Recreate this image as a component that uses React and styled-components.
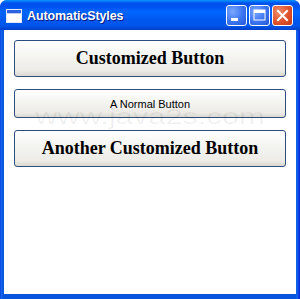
import React from "react";
import styled, { createGlobalStyle, css } from "styled-components";

const Global = createGlobalStyle`
  html, body { margin: 0; padding: 0; background: #fff; }
  #root { width: 300px; height: 299px; }
`;

const Window = styled.div`
  position: relative;
  width: 300px;
  height: 299px;
  box-sizing: border-box;
  display: flex;
  flex-direction: column;
  border-radius: 7px 7px 0 0;
  overflow: hidden;
  background: linear-gradient(90deg, #0831d9 0px, #166aee 1px, #0855dd 3px, #0855dd 296px, #166aee 297px, #0831d9 299px);
`;

const TitleBar = styled.div`
  height: 30px;
  flex: none;
  display: flex;
  align-items: center;
  padding: 0 7px 0 6px;
  box-sizing: border-box;
  background: linear-gradient(180deg, #0997ff 0px, #0053ee 3px, #0050ee 6px, #0066ff 12px, #0058ee 20px, #0055eb 26px, #0043cf 29px);
`;

const AppIcon = styled.svg`
  width: 16px;
  height: 14px;
  flex: none;
  margin-top: 1px;
`;

const Title = styled.span`
  margin-left: 5px;
  font-family: "Liberation Sans", Arial, sans-serif;
  font-weight: bold;
  font-size: 12.5px;
  color: #fff;
  text-shadow: 1px 1px 0 #0a1883;
  letter-spacing: -0.1px;
  margin-top: 1px;
`;

const Controls = styled.div`
  margin-left: auto;
  display: flex;
  gap: 2px;
`;

const CaptionButton = styled.div`
  width: 21px;
  height: 21px;
  box-sizing: border-box;
  border: 1px solid #fff;
  border-radius: 3px;
  display: flex;
  align-items: center;
  justify-content: center;
  ${(p) =>
    p.$close
      ? css`
          background: radial-gradient(circle at 30% 30%, #f08c6a 0%, #e0522c 55%, #c13a14 100%);
        `
      : css`
          background: radial-gradient(circle at 30% 30%, #7aa7ff 0%, #3b74f0 55%, #2457d8 100%);
        `}
`;

const Client = styled.div`
  flex: 1;
  margin: 0 4px 5px 4px;
  background: #fff;
  padding: 10px 10px;
  display: flex;
  flex-direction: column;
  gap: 12px;
`;

const Btn = styled.button`
  height: ${(p) => (p.$big ? 37 : 29)}px;
  width: 100%;
  box-sizing: border-box;
  border: 1px solid #2e4f7d;
  border-radius: 3px;
  background: linear-gradient(180deg, #ffffff 0%, #f5f5f2 40%, #ecebe6 85%, #d9d7cf 100%);
  color: #000;
  padding: 0;
  display: flex;
  align-items: center;
  justify-content: center;
  ${(p) =>
    p.$big
      ? css`
          font-family: "Liberation Serif", "Times New Roman", serif;
          font-weight: bold;
          font-size: 18px;
        `
      : css`
          font-family: "Liberation Sans", Arial, sans-serif;
          font-size: 11px;
        `}
`;

const Watermark = styled.div`
  position: absolute;
  left: 150px;
  top: 104px;
  transform: translateX(-50%) scaleX(1.4);
  font-family: "Liberation Sans", Arial, sans-serif;
  font-size: 22px;
  color: rgba(0, 0, 0, 0.06);
  white-space: nowrap;
  pointer-events: none;
`;

export default function App() {
  return (
    <>
      <Global />
      <Window>
        <TitleBar>
          <AppIcon viewBox="0 0 16 14">
            <rect x="0.5" y="0.5" width="15" height="13" fill="#fff" stroke="#dfe8f7" />
            <rect x="1" y="1" width="14" height="3" fill="#2a62e0" />
            <rect x="1" y="4" width="14" height="0.8" fill="#a9c0ef" />
          </AppIcon>
          <Title>AutomaticStyles</Title>
          <Controls>
            <CaptionButton>
              <svg width="19" height="19" viewBox="0 0 19 19">
                <rect x="4" y="12" width="7" height="3" fill="#fff" />
              </svg>
            </CaptionButton>
            <CaptionButton>
              <svg width="19" height="19" viewBox="0 0 19 19">
                <rect x="4" y="4" width="11" height="10" fill="none" stroke="#fff" strokeWidth="1" />
                <rect x="4" y="4" width="11" height="3" fill="#fff" />
              </svg>
            </CaptionButton>
            <CaptionButton $close>
              <svg width="19" height="19" viewBox="0 0 19 19">
                <path d="M5 5 L14 14 M14 5 L5 14" stroke="#fff" strokeWidth="2" strokeLinecap="square" />
              </svg>
            </CaptionButton>
          </Controls>
        </TitleBar>
        <Client>
          <Btn $big>Customized Button</Btn>
          <Btn>A Normal Button</Btn>
          <Btn $big>Another Customized Button</Btn>
        </Client>
        <Watermark>www.java2s.com</Watermark>
      </Window>
    </>
  );
}
